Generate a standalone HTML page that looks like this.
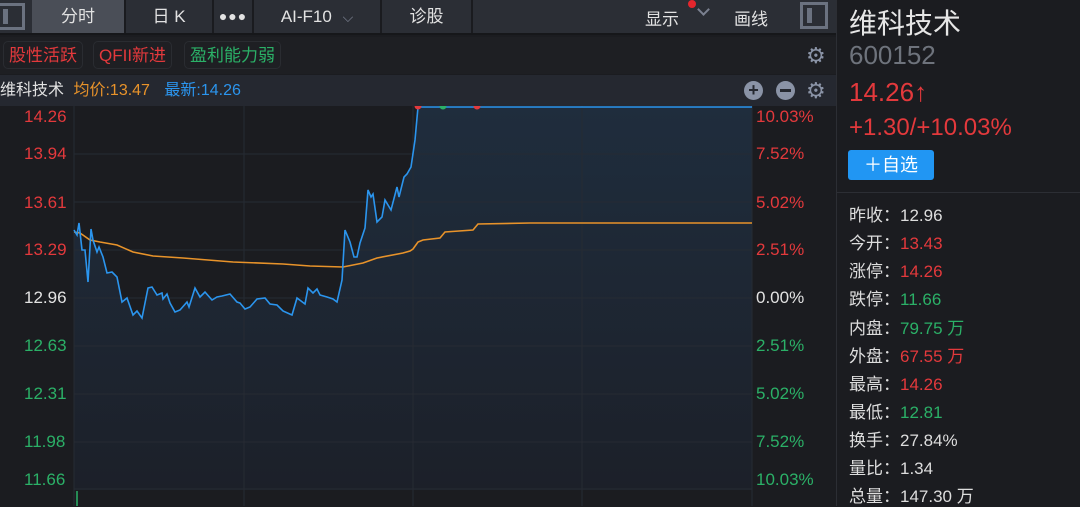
<!DOCTYPE html>
<html><head><meta charset="utf-8"><style>
*{margin:0;padding:0;box-sizing:border-box}
body{width:1080px;height:506px;background:#1b1c20;font-family:"Liberation Sans","Noto Sans CJK SC",sans-serif;position:relative;overflow:hidden;color:#ddd}
.abs{position:absolute}
.top{left:0;top:0;width:836px;height:35px;background:#2b2e35;border-bottom:2px solid #16171a}
.tab{position:absolute;top:0;height:33px;line-height:33px;text-align:center;color:#e2e2e2;font-size:17px;border-right:2px solid #1a1b1f}
.tags{left:0;top:37px;width:836px;height:37px;background:#1e1f23}
.tag{position:absolute;top:4px;height:28px;line-height:28px;border:1px solid #2a2c31;border-radius:5px;font-size:17px;padding:0 5px}
.hdr{left:0;top:75px;width:836px;height:31px;background:#252830;font-size:16px;line-height:31px}
.r{color:#e3393c}.g{color:#2bb067}
.ax{position:absolute;font-size:17px}
.st{position:absolute;left:849px;font-size:17px;color:#ddd}
</style></head><body>
<div class="abs top">
 <div class="abs" style="left:0;top:3px;width:25px;height:27px;border:3px solid #6b7280;border-left:none"><div style="position:absolute;left:3px;top:3px;width:5px;height:15px;background:#6b7280"></div></div>
 <div class="tab" style="left:32px;width:94px;background:#4a4e57">分时</div>
 <div class="tab" style="left:126px;width:88px">日 K</div>
 <div class="tab" style="left:214px;width:40px;font-size:14px;letter-spacing:1px">●●●</div>
 <div class="tab" style="left:254px;width:128px">AI-F10 <span style="color:#7b8190;font-size:14px;margin-left:6px">⌵</span></div>
 <div class="tab" style="left:382px;width:91px">诊股</div>
 <div class="tab" style="left:473px;width:2px;border:none"></div>
 <div class="abs" style="left:645px;top:5px;font-size:17px;color:#e2e2e2">显示</div>
 <div class="abs" style="left:688px;top:0;width:8px;height:8px;border-radius:50%;background:#e5262d"></div>
 <div class="abs" style="left:699px;top:5px;width:9px;height:9px;border-right:2px solid #7b8190;border-bottom:2px solid #7b8190;transform:rotate(45deg)"></div>
 <div class="abs" style="left:734px;top:5px;font-size:17px;color:#e2e2e2">画线</div>
 <div class="abs" style="left:800px;top:2px;width:28px;height:27px;border:3px solid #6b7280"><div style="position:absolute;left:4px;top:3px;width:5px;height:15px;background:#6b7280"></div></div>
</div>
<div class="abs tags">
 <div class="tag r" style="left:3px">股性活跃</div>
 <div class="tag r" style="left:93px">QFII新进</div>
 <div class="tag g" style="left:184px">盈利能力弱</div>
 <div class="abs" style="left:806px;top:6px;font-size:22px;color:#8a93a6">⚙</div>
</div>
<div class="abs hdr">
 <span style="margin-left:0;color:#e2e2e2">维科技术</span>
 <span style="margin-left:5px;color:#e8932a">均价:13.47</span>
 <span style="margin-left:10px;color:#2b95ee">最新:14.26</span>
 <div class="abs" style="left:744px;top:6px;width:19px;height:19px;border-radius:50%;background:#8a93a6;color:#252830;font-size:18px;line-height:19px;text-align:center;font-weight:bold">+</div>
 <div class="abs" style="left:776px;top:6px;width:19px;height:19px;border-radius:50%;background:#8a93a6"><div style="position:absolute;left:4px;top:8px;width:11px;height:3px;background:#252830"></div></div>
 <div class="abs" style="left:806px;top:0;font-size:22px;color:#8a93a6">⚙</div>
</div>
<svg class="abs" style="left:0;top:106px" width="836" height="400">
 <defs><linearGradient id="f" x1="0" y1="0" x2="0" y2="1"><stop offset="0" stop-color="#1f2d3d"/><stop offset="1" stop-color="#1c2029"/></linearGradient></defs>
 <g transform="translate(0,-106)">
 <path fill="url(#f)" d="M74,230 L77,235 79,223 82,250 85,250 88,282 91,229 93,240 97,252 99,247 103,257 107,273 112,272 117,277 122,302 127,298 133,315 137,311 142,318 148,288 152,287 157,295 162,293 163,299 167,294 170,303 175,312 180,310 187,302 189,307 195,288 200,297 205,292 212,300 217,297 222,296 230,294 237,302 240,303 245,309 250,307 257,299 265,298 270,304 277,305 283,311 292,315 297,298 305,304 308,288 313,293 317,289 320,295 327,297 333,299 337,302 342,280 345,230 350,242 354,257 357,257 360,243 365,228 368,190 371,197 373,194 377,222 382,217 385,200 391,210 397,187 399,197 404,177 407,174 411,167 415,140 418,107 752,107 752,490 74,490Z"/>
 <g stroke="#262b33" stroke-width="1">
  <line x1="74" y1="154" x2="752" y2="154"/><line x1="74" y1="202" x2="752" y2="202"/><line x1="74" y1="250" x2="752" y2="250"/><line x1="74" y1="298" x2="752" y2="298"/><line x1="74" y1="346" x2="752" y2="346"/><line x1="74" y1="394" x2="752" y2="394"/><line x1="74" y1="442" x2="752" y2="442"/><line x1="74" y1="489" x2="752" y2="489"/>
  <line x1="74" y1="106" x2="74" y2="506"/><line x1="244" y1="106" x2="244" y2="506"/><line x1="413" y1="106" x2="413" y2="506"/><line x1="582" y1="106" x2="582" y2="506"/><line x1="752" y1="106" x2="752" y2="506"/>
 </g>
 <line x1="77" y1="491" x2="77" y2="506" stroke="#2bb067" stroke-width="1.5"/>
 <path fill="none" stroke="#e8932a" stroke-width="1.6" d="M74,232 L80,233 90,240 100,242 117,245 133,252 153,256 183,258 233,262 283,264 310,266 343,267 363,263 377,258 403,253 410,251 413,249 418,242 423,240 440,238 445,232 473,230 478,224 530,223 647,223 752,223"/>
 <path fill="none" stroke="#2b95ee" stroke-width="1.6" d="M74,230 L77,235 79,223 82,250 85,250 88,282 91,229 93,240 97,252 99,247 103,257 107,273 112,272 117,277 122,302 127,298 133,315 137,311 142,318 148,288 152,287 157,295 162,293 163,299 167,294 170,303 175,312 180,310 187,302 189,307 195,288 200,297 205,292 212,300 217,297 222,296 230,294 237,302 240,303 245,309 250,307 257,299 265,298 270,304 277,305 283,311 292,315 297,298 305,304 308,288 313,293 317,289 320,295 327,297 333,299 337,302 342,280 345,230 350,242 354,257 357,257 360,243 365,228 368,190 371,197 373,194 377,222 382,217 385,200 391,210 397,187 399,197 404,177 407,174 411,167 415,140 418,107 752,107"/>
 <circle cx="418" cy="106" r="3.5" fill="#e3393c"/><circle cx="443" cy="106" r="3.5" fill="#2bb067"/><circle cx="477" cy="106" r="3.5" fill="#e3393c"/>
 </g>
</svg>
<div class="ax r" style="left:24px;top:107px">14.26</div>
<div class="ax r" style="left:24px;top:144px">13.94</div>
<div class="ax r" style="left:24px;top:193px">13.61</div>
<div class="ax r" style="left:24px;top:240px">13.29</div>
<div class="ax" style="left:24px;top:288px;color:#e2e2e2">12.96</div>
<div class="ax g" style="left:24px;top:336px">12.63</div>
<div class="ax g" style="left:24px;top:384px">12.31</div>
<div class="ax g" style="left:24px;top:432px">11.98</div>
<div class="ax g" style="left:24px;top:470px">11.66</div>
<div class="ax r" style="left:756px;top:107px">10.03%</div>
<div class="ax r" style="left:756px;top:144px">7.52%</div>
<div class="ax r" style="left:756px;top:193px">5.02%</div>
<div class="ax r" style="left:756px;top:240px">2.51%</div>
<div class="ax" style="left:756px;top:288px;color:#e2e2e2">0.00%</div>
<div class="ax g" style="left:756px;top:336px">2.51%</div>
<div class="ax g" style="left:756px;top:384px">5.02%</div>
<div class="ax g" style="left:756px;top:432px">7.52%</div>
<div class="ax g" style="left:756px;top:470px">10.03%</div>
<div class="abs" style="left:836px;top:0;width:1px;height:506px;background:#2c2e34"></div>
<div class="abs" style="left:849px;top:2px;font-size:28px;color:#e6e6e6">维科技术</div>
<div class="abs" style="left:849px;top:40px;font-size:26px;color:#6e737c">600152</div>
<div class="abs r" style="left:849px;top:77px;font-size:26px">14.26↑</div>
<div class="abs r" style="left:849px;top:114px;font-size:24px">+1.30/+10.03%</div>
<div class="abs" style="left:848px;top:150px;width:86px;height:30px;background:#2196f3;border-radius:3px;color:#fff;font-size:18px;line-height:30px;text-align:center">＋自选</div>
<div class="abs" style="left:837px;top:192px;width:243px;height:1px;background:#2c2e34"></div>
<div class="st" style="top:201px">昨收：12.96</div>
<div class="st" style="top:229px">今开：<span class="r">13.43</span></div>
<div class="st" style="top:257px">涨停：<span class="r">14.26</span></div>
<div class="st" style="top:285px">跌停：<span class="g">11.66</span></div>
<div class="st" style="top:314px">内盘：<span class="g">79.75 万</span></div>
<div class="st" style="top:342px">外盘：<span class="r">67.55 万</span></div>
<div class="st" style="top:370px">最高：<span class="r">14.26</span></div>
<div class="st" style="top:398px">最低：<span class="g">12.81</span></div>
<div class="st" style="top:426px">换手：27.84%</div>
<div class="st" style="top:454px">量比：1.34</div>
<div class="st" style="top:482px">总量：147.30 万</div>
</body></html>
